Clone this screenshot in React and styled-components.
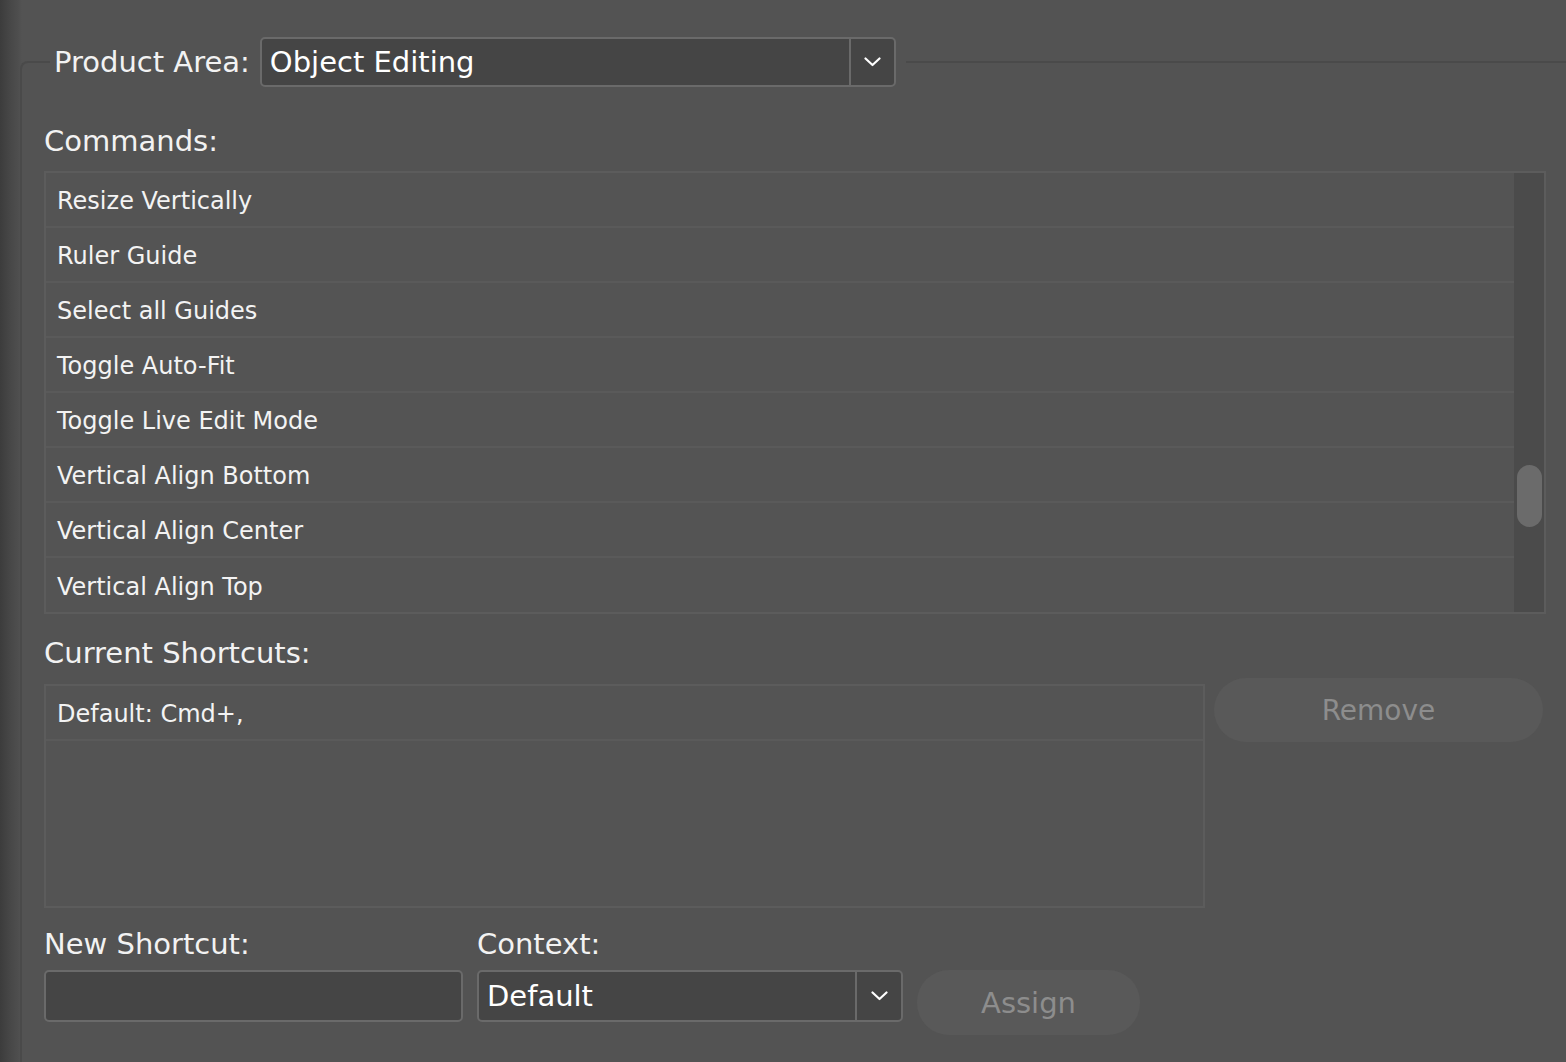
import React from 'react';
import styled, { createGlobalStyle } from 'styled-components';

const Global = createGlobalStyle`
  html, body { margin: 0; padding: 0; background: #535353; }
  body { font-family: "DejaVu Sans", "Liberation Sans", sans-serif; color: #f1f1f1; }
  * { box-sizing: border-box; }
`;

const Page = styled.div`
  width: 1566px;
  height: 1062px;
  overflow: hidden;
  display: flex;
  flex-direction: column;
  padding: 37px 0 0 20px;
  background: linear-gradient(to right, #3c3c3c 0px, #464646 9px, #4e4e4e 18px, #535353 22px);
`;

const GroupBox = styled.fieldset`
  flex: 1;
  margin: 0;
  min-width: 0;
  border: none;
  border-top: 2px solid #4a4a4a;
  border-left: 2px solid #4a4a4a;
  border-top-left-radius: 8px;
  padding: 0 20px 0 22px;
  background: #535353;
`;

const Legend = styled.legend`
  margin-left: 6px;
  padding: 0 10px 0 4px;
`;

const LegendRow = styled.div`
  display: flex;
  align-items: center;
  gap: 10px;
`;

const Label = styled.div`
  font-size: 29px;
  line-height: 36px;
  color: #f2f2f2;
  white-space: nowrap;
`;

const Heading = styled(Label)`
  margin-top: ${p => p.$mt || 0}px;
  margin-bottom: ${p => p.$mb || 0}px;
`;

const Select = styled.div`
  display: flex;
  width: ${p => p.$w}px;
  height: ${p => p.$h}px;
  background: #454545;
  border: 2px solid #6a6a6a;
  border-radius: 5px;
`;

const SelectValue = styled.div`
  flex: 1;
  display: flex;
  align-items: center;
  padding-left: 8px;
  font-size: 29px;
  color: #ffffff;
  white-space: nowrap;
`;

const SelectArrow = styled.div`
  width: ${p => p.$w}px;
  display: flex;
  align-items: center;
  justify-content: center;
  border-left: 2px solid #6a6a6a;
`;

const List = styled.div`
  display: flex;
  width: ${p => p.$w ? `${p.$w}px` : 'auto'};
  height: ${p => p.$h}px;
  border: 2px solid #5c5c5c;
  background: #545454;
`;

const Rows = styled.div`
  flex: 1;
  display: flex;
  flex-direction: column;
`;

const Row = styled.div`
  height: 55px;
  flex: none;
  display: flex;
  align-items: center;
  padding: 3px 0 0 11px;
  font-size: 24px;
  color: #f3f3f3;
  border-bottom: ${p => p.$last ? 'none' : '2px solid #5a5a5a'};
  white-space: nowrap;
`;

const Track = styled.div`
  width: 30px;
  background: #4b4b4b;
  display: flex;
  flex-direction: column;
  align-items: center;
`;

const Thumb = styled.div`
  width: 25px;
  height: 62px;
  border-radius: 13px;
  background: #6b6b6b;
`;

const ShortcutArea = styled.div`
  display: flex;
  gap: 9px;
`;

const Column = styled.div`
  display: flex;
  flex-direction: column;
`;

const PillButton = styled.button`
  width: ${p => p.$w}px;
  height: ${p => p.$h}px;
  border: none;
  border-radius: 32px;
  background: #595959;
  color: #8d8d8d;
  font-family: "DejaVu Sans", "Liberation Sans", sans-serif;
  font-size: ${p => p.$fs}px;
  padding: 0;
  cursor: default;
`;

const BottomRow = styled.div`
  display: flex;
  gap: 14px;
  margin-top: 18px;
`;

const Field = styled.div`
  display: flex;
  flex-direction: column;
  gap: 8px;
`;

const Input = styled.div`
  width: 419px;
  height: 52px;
  background: #454545;
  border: 2px solid #6a6a6a;
  border-radius: 5px;
`;

const ButtonSlot = styled.div`
  padding-top: ${p => p.$pt}px;
`;

const Chevron = () => (
  <svg width="17" height="10" viewBox="0 0 17 10">
    <polyline points="1.5,1.5 8.5,8 15.5,1.5" fill="none" stroke="#ffffff" strokeWidth="2.2" strokeLinecap="round" strokeLinejoin="round" />
  </svg>
);

const commands = [
  'Resize Vertically',
  'Ruler Guide',
  'Select all Guides',
  'Toggle Auto-Fit',
  'Toggle Live Edit Mode',
  'Vertical Align Bottom',
  'Vertical Align Center',
  'Vertical Align Top',
];

export default function App() {
  return (
    <>
      <Global />
      <Page>
        <GroupBox>
          <Legend>
            <LegendRow>
              <Label>Product Area:</Label>
              <Select $w={636} $h={50}>
                <SelectValue>Object Editing</SelectValue>
                <SelectArrow $w={45}><Chevron /></SelectArrow>
              </Select>
            </LegendRow>
          </Legend>

          <Heading $mt={36} $mb={12}>Commands:</Heading>
          <List $h={443}>
            <Rows>
              {commands.map((c, i) => (
                <Row key={c} $last={i === commands.length - 1}>{c}</Row>
              ))}
            </Rows>
            <Track>
              <Thumb style={{ marginTop: 292 }} />
            </Track>
          </List>

          <ShortcutArea>
            <Column>
              <Heading $mt={21} $mb={13}>Current Shortcuts:</Heading>
              <List $w={1161} $h={224}>
                <Rows>
                  <Row>Default: Cmd+,</Row>
                </Rows>
              </List>
            </Column>
            <ButtonSlot $pt={64}>
              <PillButton $w={329} $h={64} $fs={28}>Remove</PillButton>
            </ButtonSlot>
          </ShortcutArea>

          <BottomRow>
            <Field>
              <Label>New Shortcut:</Label>
              <Input />
            </Field>
            <Field>
              <Label>Context:</Label>
              <Select $w={426} $h={52}>
                <SelectValue>Default</SelectValue>
                <SelectArrow $w={46}><Chevron /></SelectArrow>
              </Select>
            </Field>
            <ButtonSlot $pt={44}>
              <PillButton $w={223} $h={65} $fs={29}>Assign</PillButton>
            </ButtonSlot>
          </BottomRow>
        </GroupBox>
      </Page>
    </>
  );
}
